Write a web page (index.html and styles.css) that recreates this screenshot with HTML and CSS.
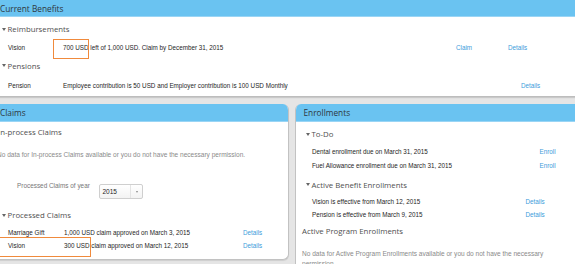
FILE: index.html
```html
<!DOCTYPE html>
<html>
<head>
<meta charset="utf-8">
<link rel="stylesheet" href="styles.css">
</head>
<body>
<div class="page">
  <section class="panel top">
    <div class="hd">Current Benefits</div>
    <div class="bd top-bd">
      <div class="sec"><span class="tri"></span>Reimbursements</div>
      <div class="row t-row1">
        <span class="lbl">Vision</span>
        <span class="val">700 USD left of 1,000 USD. Claim by December 31, 2015</span>
        <span class="lk lk-claim">Claim</span>
        <span class="lk">Details</span>
      </div>
      <div class="sec t-sec2"><span class="tri"></span>Pensions</div>
      <div class="row t-row2">
        <span class="lbl">Pension</span>
        <span class="val">Employee contribution is 50 USD and Employer contribution is 100 USD Monthly</span>
        <span class="lk lk-pension">Details</span>
      </div>
    </div>
  </section>

  <div class="cols">
    <section class="panel claims">
      <div class="hd hd-side">Claims</div>
      <div class="bd claims-bd">
        <div class="sec plain">In-process Claims</div>
        <div class="nodata nodata-left">No data for In-process Claims available or you do not have the necessary permission.</div>
        <div class="yearrow">
          <span class="yearlbl">Processed Claims of year</span>
          <div class="sel"><span class="sel-v">2015</span><span class="sel-btn"></span></div>
        </div>
        <div class="sec c-sec2"><span class="tri"></span>Processed Claims</div>
        <div class="row c-row1">
          <span class="lbl lbl-c">Marriage Gift</span>
          <span class="val val-c">1,000 USD claim approved on March 3, 2015</span>
          <span class="lk">Details</span>
        </div>
        <div class="row">
          <span class="lbl lbl-c">Vision</span>
          <span class="val val-c">300 USD claim approved on March 12, 2015</span>
          <span class="lk">Details</span>
        </div>
      </div>
    </section>

    <section class="panel enroll">
      <div class="hd hd-side hd-right">Enrollments</div>
      <div class="bd enroll-bd">
        <div class="sec"><span class="tri"></span>To-Do</div>
        <div class="row e-row1">
          <span class="txt txt-en">Dental enrollment due on March 31, 2015</span>
          <span class="lk">Enroll</span>
        </div>
        <div class="row e-row2">
          <span class="txt txt-en">Fuel Allowance enrollment due on March 31, 2015</span>
          <span class="lk">Enroll</span>
        </div>
        <div class="sec e-sec2"><span class="tri"></span>Active Benefit Enrollments</div>
        <div class="row e-row3">
          <span class="txt txt-det">Vision is effective from March 12, 2015</span>
          <span class="lk">Details</span>
        </div>
        <div class="row">
          <span class="txt txt-det">Pension is effective from March 9, 2015</span>
          <span class="lk">Details</span>
        </div>
        <div class="sec plain e-sec3">Active Program Enrollments</div>
        <div class="nodata nodata-right">No data for Active Program Enrollments available or you do not have the necessary<br>permission.</div>
      </div>
    </section>
  </div>

  <div class="mark mark-a"></div>
  <div class="mark mark-b"></div>
</div>
</body>
</html>
```

FILE: styles.css
```css
html, body {
  margin: 0;
  padding: 0;
}
body {
  width: 575px;
  height: 264px;
  overflow: hidden;
  background: #e5e5e5;
  font-family: "Liberation Sans", Arial, sans-serif;
}
.page {
  position: relative;
  width: 591px;
  margin-left: -8px;
}
.panel {
  background: #fff;
  box-sizing: border-box;
}
.top {
  border-bottom: 1px solid #bdbdbd;
  box-shadow: 0 1px 1px rgba(0, 0, 0, 0.12);
}
.hd {
  height: 17px;
  line-height: 17px;
  box-sizing: border-box;
  background: #6ac3f1;
  border-bottom: 1px solid #9ad5f5;
  padding-left: 8px;
  font-family: "Open Sans", sans-serif;
  font-size: 8.3px;
  color: #2e3740;
}
.hd-side {
  height: 18px;
  line-height: 18px;
}
.hd-right {
  padding-left: 7.5px;
}
.top-bd {
  padding: 5px 0 4px 0;
}
.sec {
  height: 14px;
  line-height: 14px;
  display: flex;
  align-items: center;
  padding-left: 9.5px;
  font-family: "Open Sans", sans-serif;
  font-size: 7.8px;
  color: #4f4f4f;
  white-space: nowrap;
}
.sec.plain {
  padding-left: 6px;
}
.tri {
  width: 0;
  height: 0;
  border-left: 2.3px solid transparent;
  border-right: 2.3px solid transparent;
  border-top: 3px solid #666;
  margin-right: 2px;
}
.row {
  display: flex;
  height: 12.5px;
  line-height: 12.5px;
  padding-left: 16px;
  font-size: 6.3px;
  color: #1e1e1e;
  white-space: nowrap;
}
.lbl {
  width: 55px;
  flex: none;
}
.val {
  width: 393px;
  flex: none;
}
.lk {
  color: #3d9cdb;
  flex: none;
}
.lk-claim {
  width: 52px;
}
.lk-pension {
  margin-left: 65px;
}
.t-row1 {
  margin-top: 6px;
}
.t-sec2 {
  margin-top: 4px;
}
.t-row2 {
  margin-top: 7px;
}

.cols {
  display: flex;
  gap: 6px;
  margin-top: 7px;
  align-items: flex-start;
}
.claims {
  width: 297px;
  flex: none;
  border-right: 1px solid #c2c2c2;
  border-bottom: 1px solid #c2c2c2;
  border-radius: 0 6px 6px 0;
  overflow: hidden;
  box-shadow: 0 1px 1px rgba(0, 0, 0, 0.1);
}
.enroll {
  width: 288px;
  flex: none;
  height: 170px;
  border-left: 1px solid #c2c2c2;
  border-radius: 6px 0 0 0;
  overflow: hidden;
}
.claims-bd {
  padding: 3px 0 6.5px 0;
}
.nodata {
  font-size: 6.55px;
  color: #8a8a8a;
  white-space: nowrap;
}
.nodata-left {
  margin-top: 10px;
  height: 12px;
  line-height: 12px;
  padding-left: 5px;
}
.yearrow {
  margin-top: 22px;
  height: 16px;
  display: flex;
  align-items: flex-start;
  padding-left: 25px;
}
.yearlbl {
  width: 82px;
  flex: none;
  margin-top: -1px;
  line-height: 8px;
  font-size: 6.4px;
  color: #777;
  white-space: nowrap;
}
.sel {
  margin-top: 1px;
  width: 44px;
  height: 15px;
  box-sizing: border-box;
  border: 1px solid #cfcfcf;
  border-radius: 2px;
  background: linear-gradient(#ffffff, #f3f3f3);
  display: flex;
}
.sel-v {
  flex: 1;
  padding-left: 2.5px;
  line-height: 13px;
  font-size: 6.5px;
  color: #222;
}
.sel-btn {
  width: 11px;
  border-left: 1px solid #e4e4e4;
  display: flex;
  align-items: center;
  justify-content: center;
}
.sel-btn::after {
  content: "";
  width: 0;
  height: 0;
  border-left: 1.8px solid transparent;
  border-right: 1.8px solid transparent;
  border-top: 2px solid #888;
}
.c-sec2 {
  margin-top: 9px;
}
.c-row1 {
  margin-top: 5px;
}
.lbl-c {
  width: 56px;
}
.val-c {
  width: 179px;
}

.enroll-bd {
  padding-top: 5px;
}
.txt {
  flex: none;
}
.txt-en {
  width: 227.5px;
}
.txt-det {
  width: 213.5px;
}
.e-row1 {
  margin-top: 5px;
}
.e-row2 {
  margin-top: 1px;
}
.e-sec2 {
  margin-top: 5.5px;
}
.e-row3 {
  margin-top: 4.5px;
}
.e-sec3 {
  margin-top: 2.5px;
}
.nodata-right {
  margin-top: 11px;
  line-height: 10px;
  padding-left: 6px;
}

.mark {
  position: absolute;
  box-sizing: border-box;
  border: 1.2px solid #f08a3c;
}
.mark-a {
  left: 61px;
  top: 39px;
  width: 36px;
  height: 20px;
}
.mark-b {
  left: 0;
  top: 237px;
  width: 99px;
  height: 20px;
}
```
